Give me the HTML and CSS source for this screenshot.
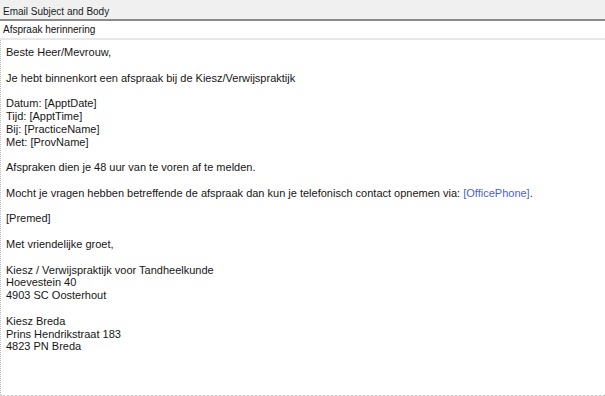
FILE: index.html
```html
<!DOCTYPE html>
<html lang="nl">
<head>
    <meta charset="UTF-8">
    <title>Email Subject and Body</title>
    <link rel="stylesheet" href="styles.css">
</head>
<body>
    <div class="panel">
        <div class="panel-title">Email Subject and Body</div>
        <div class="subject">Afspraak herinnering</div>
        <div class="body">
            <p>Beste Heer/Mevrouw,</p>
            <p>Je hebt binnenkort een afspraak bij de Kiesz/Verwijspraktijk</p>
            <p>Datum: [ApptDate]<br>Tijd: [ApptTime]<br>Bij: [PracticeName]<br>Met: [ProvName]</p>
            <p>Afspraken dien je 48 uur van te voren af te melden.</p>
            <p>Mocht je vragen hebben betreffende de afspraak dan kun je telefonisch contact opnemen via: <span class="field">[OfficePhone]</span>.</p>
            <p>[Premed]</p>
            <p>Met vriendelijke groet,</p>
            <p>Kiesz / Verwijspraktijk voor Tandheelkunde<br>Hoevestein 40<br>4903 SC Oosterhout</p>
            <p>Kiesz Breda<br>Prins Hendrikstraat 183<br>4823 PN Breda</p>
        </div>
    </div>
</body>
</html>
```

FILE: styles.css
```css
html, body {
    margin: 0;
    padding: 0;
    background: #fff;
}
.panel {
    width: 605px;
    height: 396px;
    font-family: "Liberation Sans", Arial, sans-serif;
    color: #161616;
}
.panel-title {
    height: 19px;
    line-height: 24px;
    padding-left: 3px;
    background: #f0f0f0;
    font-size: 10px;
    color: #1a1a1a;
}
.subject {
    height: 17px;
    line-height: 18px;
    padding-left: 3px;
    border-top: 2px solid #8a8a8a;
    border-bottom: 2px solid #e8e8e8;
    font-size: 10px;
    color: #111;
}
.body {
    height: 349px;
    padding: 6px 0 0 5px;
    border-left: 1px dotted #b8b8b8;
    border-bottom: 2px dotted #c0c0c0;
    font-size: 11px;
    line-height: 12.8px;
}
.body p {
    margin: 0 0 12.8px 0;
}
.field {
    color: #4a5fd6;
}
```
